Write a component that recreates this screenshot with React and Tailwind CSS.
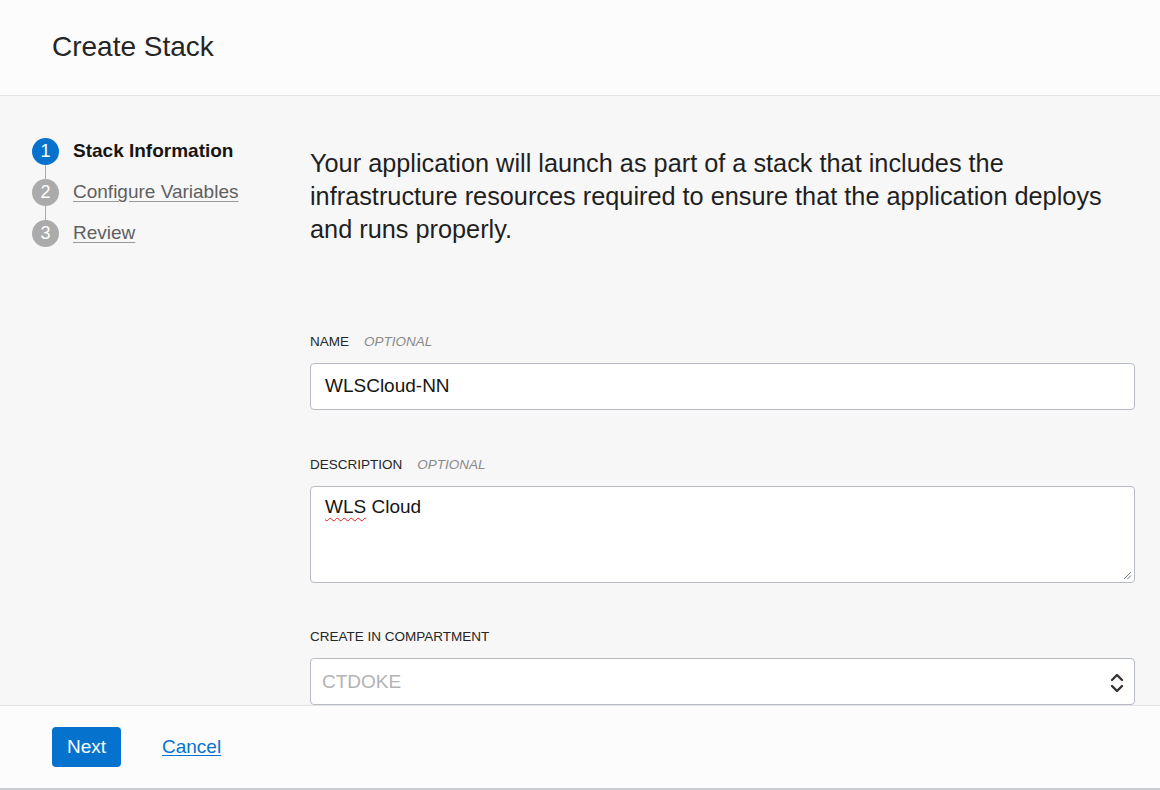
import React from "react";

function Step({ n, label, active, first, last }) {
  return (
    <div className="relative flex items-center h-[41px]">
      {!first && <div className="absolute left-[13px] top-0 h-1/2 w-px bg-[#aaaaaa]" />}
      {!last && <div className="absolute left-[13px] bottom-0 h-1/2 w-px bg-[#aaaaaa]" />}
      <div
        className={
          "relative z-10 flex h-[27px] w-[27px] items-center justify-center rounded-full text-[18px] text-white " +
          (active ? "bg-[#0572ce]" : "bg-[#ababab]")
        }
      >
        {n}
      </div>
      <span
        className={
          "ml-[14px] text-[19px] " +
          (active ? "font-bold text-[#161513]" : "text-[#5f5f5f] underline decoration-[#9a9a9a] underline-offset-[3px]")
        }
      >
        {label}
      </span>
    </div>
  );
}

export default function App() {
  return (
    <div
      className="flex h-[790px] w-[1160px] flex-col overflow-hidden bg-[#f7f7f7] text-[#161513]"
      style={{ fontFamily: '"Liberation Sans", Arial, sans-serif' }}
    >
      <header className="flex h-[96px] shrink-0 items-center border-b border-[#e3e3e3] bg-[#fcfcfc] pl-[52px]">
        <h1 className="-mt-[2px] text-[28px] font-normal text-[#252525]">Create Stack</h1>
      </header>

      <div className="flex flex-1 overflow-hidden">
        <nav className="w-[310px] shrink-0 pl-[32px] pt-[35px]">
          <Step n="1" label="Stack Information" active first />
          <Step n="2" label="Configure Variables" />
          <Step n="3" label="Review" last />
        </nav>

        <main className="w-[825px] shrink-0 pt-[51px]">
          <p className="text-[25.3px] leading-[33px] text-[#1f1f1f]">
            Your application will launch as part of a stack that includes the infrastructure resources required to
            ensure that the application deploys and runs properly.
          </p>

          <div className="mt-[88px]">
            <div className="flex items-baseline gap-[15px] text-[13.5px] leading-[16px]">
              <span className="text-[#262626]">NAME</span>
              <span className="italic text-[#8a8a8a]">OPTIONAL</span>
            </div>
            <div className="mt-[13px] flex h-[47px] items-center rounded-[4px] border border-[#b7bcc4] bg-white px-[14px] text-[19px] text-[#161513]">
              WLSCloud-NN
            </div>
          </div>

          <div className="mt-[47px]">
            <div className="flex items-baseline gap-[15px] text-[13.5px] leading-[16px]">
              <span className="text-[#262626]">DESCRIPTION</span>
              <span className="italic text-[#8a8a8a]">OPTIONAL</span>
            </div>
            <div className="relative mt-[13px] h-[97px] rounded-[4px] border border-[#b7bcc4] bg-white px-[14px] pt-[6px] text-[19px] text-[#161513]">
              <span className="underline decoration-wavy decoration-[#e02020] decoration-1 underline-offset-[4px]">WLS</span>{" "}
              Cloud
              <svg className="absolute bottom-[2px] right-[2px]" width="10" height="10" viewBox="0 0 10 10">
                <line x1="2" y1="9" x2="9" y2="2" stroke="#777" strokeWidth="1" />
                <line x1="5.5" y1="9" x2="9" y2="5.5" stroke="#777" strokeWidth="1" />
              </svg>
            </div>
          </div>

          <div className="mt-[46px]">
            <div className="text-[13.5px] leading-[16px] text-[#262626]">CREATE IN COMPARTMENT</div>
            <div className="mt-[13px] flex h-[47px] items-center justify-between rounded-[4px] border border-[#b7bcc4] bg-white pl-[11px] pr-[10px] text-[19px] text-[#b3b3b3]">
              <span className="mt-[2px]">CTDOKE</span>
              <svg width="14" height="26" viewBox="0 0 14 26" className="mt-[4px]">
                <path d="M2 9 L7 4 L12 9" fill="none" stroke="#333" strokeWidth="2.4" strokeLinecap="round" strokeLinejoin="round" />
                <path d="M2 15 L7 20 L12 15" fill="none" stroke="#333" strokeWidth="2.4" strokeLinecap="round" strokeLinejoin="round" />
              </svg>
            </div>
          </div>
        </main>
      </div>

      <footer className="flex h-[85px] shrink-0 items-center border-t border-b-2 border-t-[#e3e3e3] border-b-[#c9ccd0] bg-[#fcfcfc] pl-[52px]">
        <button className="h-[40px] w-[69px] rounded-[4px] bg-[#0572ce] text-[19px] text-white">Next</button>
        <a className="ml-[41px] text-[19px] text-[#0572ce] underline underline-offset-[2px]" href="#">
          Cancel
        </a>
      </footer>
    </div>
  );
}
